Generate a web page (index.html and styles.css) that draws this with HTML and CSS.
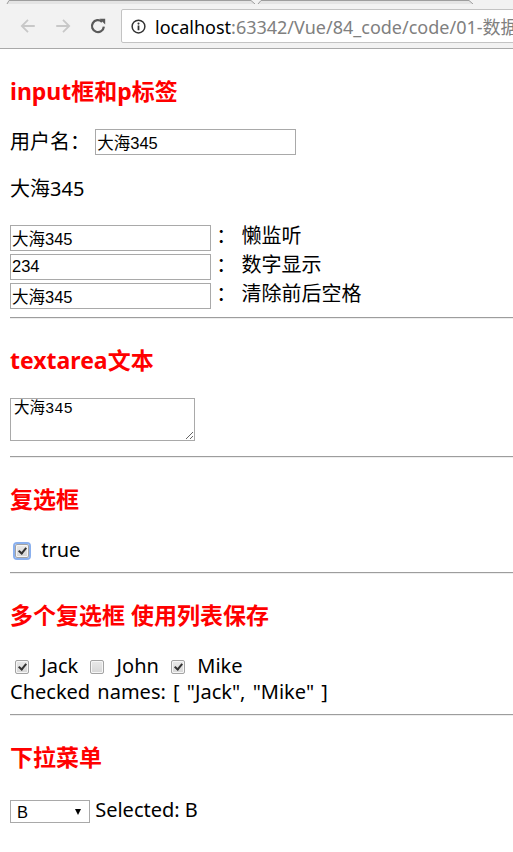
FILE: index.html
```html
<!DOCTYPE html>
<html>
<head>
  <title>数据绑定</title>
<link rel="stylesheet" href="styles.css"></head>
<body>

  <div class="browser">
    <svg class="tabstrip" width="513" height="4" viewBox="0 0 513 4">
      <polyline points="7,4 9,0.5 251,0.5 255,4" fill="#e4e4e4" stroke="#9e9e9e" stroke-width="1"/>
      <polyline points="258,4 261,0.5 469,0.5 473,4" fill="#e4e4e4" stroke="#9e9e9e" stroke-width="1"/>
    </svg>
    <div class="toolbar">
      <span class="nav-btn">
        <svg width="18" height="18" viewBox="0 0 16 16"><path d="M14 8H2.5M8 2.5L2.5 8 8 13.5" fill="none" stroke="#c8c8c8" stroke-width="1.6"/></svg>
      </span>
      <span class="nav-btn">
        <svg width="18" height="18" viewBox="0 0 16 16"><path d="M2 8h11.5M8 2.5L13.5 8 8 13.5" fill="none" stroke="#c8c8c8" stroke-width="1.6"/></svg>
      </span>
      <span class="nav-btn">
        <svg width="18" height="18" viewBox="0 0 16 16"><path d="M13.2 8.6A5.3 5.3 0 1 1 11.6 4.3" fill="none" stroke="#5a5a5a" stroke-width="2"/><polygon points="9.3,1.6 14.4,1.6 14.4,6.7" fill="#5a5a5a"/></svg>
      </span>
      <div class="omnibox">
        <svg class="info" width="15" height="15" viewBox="0 0 16 16"><circle cx="8" cy="8" r="6.8" fill="none" stroke="#333" stroke-width="1.6"/><circle cx="8" cy="4.9" r="1.1" fill="#333"/><path d="M8 7v5" stroke="#333" stroke-width="1.9"/></svg>
        <span class="url"><span class="host">localhost</span>:63342/Vue/84_code/code/01-数据</span>
      </div>
    </div>
  </div>

  <div id="app" class="page">
    <h3>input框和p标签</h3>
    <div class="user-row">用户名： <input type="text" class="text-input" value="大海345"></div>
    <p class="echo">大海345</p>
    <div class="modifiers">
      <div class="mod-row"><input type="text" class="text-input" value="大海345"> ： 懒监听</div>
      <div class="mod-row"><input type="text" class="text-input" value="234"> ： 数字显示</div>
      <div class="mod-row"><input type="text" class="text-input" value="大海345"> ： 清除前后空格</div>
    </div>
    <hr>

    <h3>textarea文本</h3>
    <div class="area-box">
      <textarea class="area">大海345</textarea>
    </div>
    <hr>

    <h3>复选框</h3>
    <div class="check-row"><input type="checkbox" class="check focused" checked> true</div>
    <hr>

    <h3>多个复选框 使用列表保存</h3>
    <div class="check-row">
      <input type="checkbox" class="check" checked> Jack
      <input type="checkbox" class="check"> John
      <input type="checkbox" class="check" checked> Mike
    </div>
    <div class="check-row">Checked names: [ "Jack", "Mike" ]</div>
    <hr>

    <h3>下拉菜单</h3>
    <div class="select-row">
      <span class="select-wrap">
        <select class="picker">
          <option>A</option>
          <option selected>B</option>
          <option>C</option>
        </select>
      </span>
      Selected: B
    </div>
  </div>

</body>
</html>
```

FILE: styles.css
```css
body {
  margin: 0;
  background-color: #fff;
  font-family: "Noto Sans", "Noto Sans CJK SC", sans-serif;
  font-size: 20px;
  color: #000;
  overflow: hidden;
}

/* browser chrome */
.browser {
  background-color: #f2f2f2;
}

.tabstrip {
  display: block;
}

.toolbar {
  height: 44px;
  display: flex;
  align-items: center;
  padding-left: 10px;
  border-bottom: 1px solid #a9a9a9;
}

.nav-btn {
  width: 35px;
  height: 30px;
  display: flex;
  align-items: center;
  justify-content: center;
}

.omnibox {
  flex: 1;
  height: 32px;
  margin-left: 6px;
  margin-right: -20px;
  background-color: #fff;
  border: 1px solid #c3c3c3;
  border-radius: 2px;
  display: flex;
  align-items: center;
  padding-left: 9px;
  overflow: hidden;
  white-space: nowrap;
}

.info {
  flex-shrink: 0;
}

.url {
  margin-left: 9px;
  font-family: "Noto Sans", "Noto Sans CJK SC", sans-serif;
  font-size: 18px;
  color: #808080;
}

.host {
  color: #000;
}

/* page */
.page {
  padding: 1px 10px 0;
}

h3 {
  font-size: 23px;
  line-height: 24px;
  font-weight: bold;
  color: #f00;
  margin: 29px 0 26px;
}

.text-input {
  width: 201px;
  height: 26px;
  box-sizing: border-box;
  border: 1px solid #a9a9a9;
  padding: 0 1px;
  font-family: "Liberation Sans", "Noto Sans CJK SC", sans-serif;
  font-size: 16.5px;
  color: #000;
  vertical-align: middle;
  margin: 0;
}

.user-row {
  height: 26px;
  line-height: 26px;
}

.user-row .text-input {
  vertical-align: top;
}

.echo {
  margin: 22px 0 0;
  line-height: 24px;
}

.modifiers {
  margin-top: 20px;
}

.mod-row {
  height: 29px;
  line-height: 29px;
}

hr {
  height: 0;
  margin: 9px -10px 0 0;
  border: none;
  border-top: 1px solid #9d9d9d;
  border-bottom: 1px solid #eeeeee;
}

.area-box {
  padding-bottom: 6px;
}

.area {
  display: block;
  width: 185px;
  height: 43px;
  box-sizing: border-box;
  margin: 0;
  padding: 2px 3px;
  border: 1px solid #a9a9a9;
  font-family: "Liberation Mono", "Noto Sans CJK SC", monospace;
  font-size: 15.5px;
  line-height: 17px;
  color: #000;
}

.check-row {
  height: 26px;
  line-height: 26px;
  word-spacing: 2px;
}

.check {
  appearance: none;
  -webkit-appearance: none;
  position: relative;
  width: 14px;
  height: 14px;
  margin: 0 5px;
  border: 1px solid #a3a3a3;
  border-radius: 2px;
  background: linear-gradient(#e9e9e9, #d6d6d6);
  box-shadow: inset 0 0 0 1px #f6f6f6;
  vertical-align: -1px;
}

.check:checked::after {
  content: "";
  position: absolute;
  left: 3.5px;
  top: 1px;
  width: 3px;
  height: 6px;
  border: solid #333;
  border-width: 0 2px 2px 0;
  transform: rotate(40deg);
}

.check.focused {
  outline: 2px solid #8ab0ee;
  outline-offset: 0;
}

.select-row {
  height: 30px;
  line-height: 30px;
}

.select-wrap {
  position: relative;
  display: inline-block;
  vertical-align: middle;
  line-height: 0;
}

.select-wrap::after {
  content: "";
  position: absolute;
  right: 9px;
  top: 9px;
  border-left: 3px solid transparent;
  border-right: 3px solid transparent;
  border-top: 6px solid #000;
}

.picker {
  appearance: none;
  -webkit-appearance: none;
  width: 80px;
  height: 23px;
  margin: 0;
  padding: 0 0 0 6px;
  border: 1px solid #a9a9a9;
  border-radius: 0;
  background-color: #fff;
  font-family: "Liberation Sans", sans-serif;
  font-size: 16.5px;
  color: #000;
}
```
